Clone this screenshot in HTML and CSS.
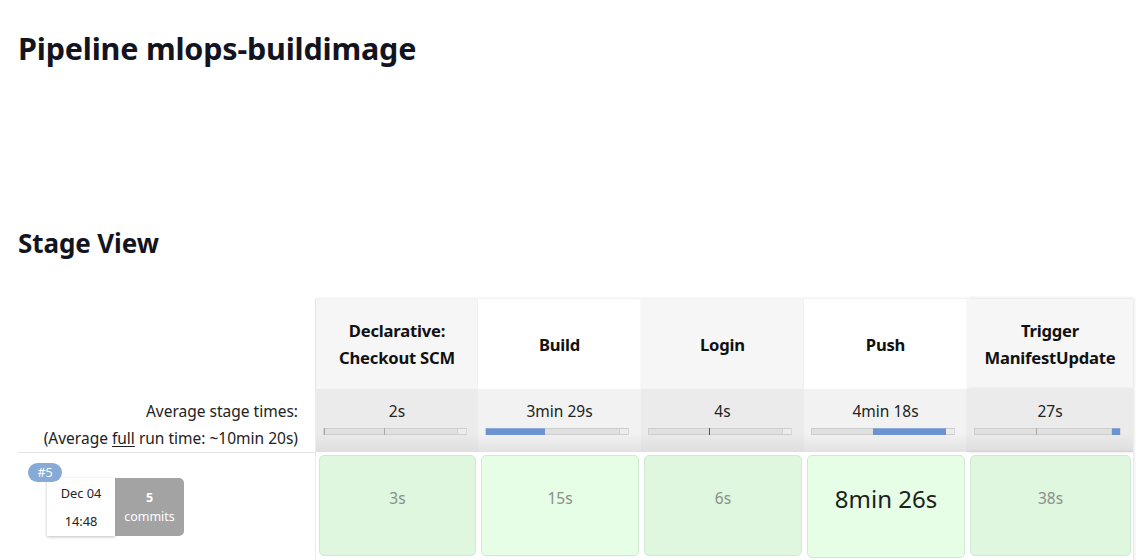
FILE: index.html
```html
<!DOCTYPE html>
<html>
<head>
<meta charset="utf-8">
<link rel="stylesheet" href="styles.css">
</head>
<body>
<h1 class="title">Pipeline mlops-buildimage</h1>
<h2 class="subtitle">Stage View</h2>
<div class="stage-table">
  <div class="corner"></div>
  <div class="head odd">Declarative:<br>Checkout SCM</div>
  <div class="head even">Build</div>
  <div class="head odd">Login</div>
  <div class="head even">Push</div>
  <div class="head odd last">Trigger<br>ManifestUpdate</div>

  <div class="avg-label">
    <div>Average stage times:</div>
    <div>(Average <u>full</u> run time: ~10min 20s)</div>
  </div>
  <div class="avg odd"><div class="avg-time">2s</div><div class="bar"><span class="tick" style="left:0"></span><span class="tick" style="left:60px"></span></div></div>
  <div class="avg even"><div class="avg-time">3min 29s</div><div class="bar"><span class="fill" style="left:0;width:59px"></span></div></div>
  <div class="avg odd"><div class="avg-time">4s</div><div class="bar"><span class="tick dark" style="left:60px"></span></div></div>
  <div class="avg even"><div class="avg-time">4min 18s</div><div class="bar"><span class="fill" style="left:61px;width:73px"></span></div></div>
  <div class="avg odd last"><div class="avg-time">27s</div><div class="bar wide"><span class="tick" style="left:61px"></span><span class="fill" style="left:137px;width:8px"></span></div></div>

  <div class="run-label">
    <div class="run-card">
      <span class="badge">#5</span>
      <div class="date"><div>Dec 04</div><div>14:48</div></div>
      <div class="commits"><b>5</b><span>commits</span></div>
    </div>
  </div>
  <div class="cell-wrap"><div class="cell odd">3s</div></div>
  <div class="cell-wrap"><div class="cell even">15s</div></div>
  <div class="cell-wrap"><div class="cell odd">6s</div></div>
  <div class="cell-wrap"><div class="cell even big">8min 26s</div></div>
  <div class="cell-wrap last"><div class="cell odd">38s</div></div>
</div>
</body>
</html>
```
FILE: styles.css
```css
html, body {
  margin: 0;
  padding: 0;
  background: #fff;
}
body {
  font-family: "Noto Sans", "Open Sans", sans-serif;
  color: #14141f;
  padding-left: 18px;
  width: 1124px;
  height: 560px;
  overflow: hidden;
}
.title {
  font-size: 30.5px;
  font-weight: 700;
  margin: 26px 0 0 0;
  line-height: 44px;
  letter-spacing: -0.2px;
}
.subtitle {
  font-size: 26px;
  font-weight: 700;
  margin: 155px 0 0 0;
  line-height: 36px;
  letter-spacing: -0.1px;
}
.stage-table {
  margin-top: 38px;
  display: grid;
  grid-template-columns: 298px 162px 163px 163px 163px 166px;
  grid-template-rows: 90px 63px 109px;
}
.corner {
  border-right: 1px solid #ececec;
}
.head {
  display: flex;
  align-items: center;
  justify-content: center;
  text-align: center;
  font-weight: 700;
  font-size: 16.6px;
  line-height: 27px;
  color: #111;
  letter-spacing: -0.2px;
  box-shadow: 0 -1px 2px rgba(0,0,0,0.08);
}
.head.odd { background: #f6f6f6; }
.head.even { background: #fff; }
.last { box-shadow: 1px 0 3px rgba(0,0,0,0.12); }
.head.last { box-shadow: 1px -1px 3px rgba(0,0,0,0.12); }
.avg-label {
  text-align: right;
  padding-right: 17px;
  font-size: 15.5px;
  line-height: 27px;
  color: #222;
  padding-top: 9px;
  border-right: 1px solid #ececec;
}
.avg-label u { text-underline-offset: 2px; }
.avg {
  display: flex;
  flex-direction: column;
  align-items: flex-start;
  padding-top: 9px;
  padding-left: 7px;
}
.avg.odd { background: linear-gradient(#ebebeb 0, #ebebeb 70%, #dedede 100%); }
.avg.even { background: linear-gradient(#f2f2f2 0, #f2f2f2 70%, #e2e2e2 100%); }
.avg-time {
  align-self: stretch;
  text-align: center;
  font-size: 15.5px;
  line-height: 26px;
  color: #222;
  padding-right: 7px;
}
.bar {
  position: relative;
  width: 142px;
  height: 5px;
  margin-top: 4px;
  background: #e0e0e0;
  border: 1px solid #cdcdcd;
  border-right-color: #d8d8d8;
}
.bar.wide { width: 145px; }
.bar::after {
  content: "";
  position: absolute;
  right: 0;
  top: 0;
  bottom: 0;
  width: 8px;
  background: #ececec;
  border-left: 1px solid #d2d2d2;
}
.bar .tick {
  position: absolute;
  top: -1px;
  width: 1px;
  height: 7px;
  background: #aaa;
}
.bar .tick.dark { background: #555; }
.bar .fill {
  position: absolute;
  top: -1px;
  height: 7px;
  background: #6b93d0;
  z-index: 1;
  border-top: 1px solid #8aa8d8;
  box-sizing: border-box;
}
.run-label {
  border-top: 1px solid #e2e2e2;
  border-bottom: 1px solid #e2e2e2;
  border-right: 1px solid #ececec;
  padding: 25px 0 0 29px;
}
.run-card {
  position: relative;
  display: flex;
  height: 58px;
}
.badge {
  position: absolute;
  left: -19px;
  top: -15px;
  width: 34px;
  height: 19px;
  border-radius: 10px;
  background: #88aad6;
  color: #fff;
  font-size: 12.5px;
  line-height: 19px;
  text-align: center;
  z-index: 2;
}
.date {
  width: 68px;
  background: #fff;
  box-shadow: 0 1px 3px rgba(0,0,0,0.25);
  display: flex;
  flex-direction: column;
  align-items: center;
  justify-content: center;
  gap: 9px;
  font-size: 12.8px;
  color: #222;
  line-height: 19px;
}
.commits {
  width: 69px;
  background: #a3a3a3;
  border-radius: 0 5px 5px 0;
  color: #fff;
  display: flex;
  flex-direction: column;
  align-items: center;
  justify-content: center;
  font-size: 12.5px;
  line-height: 19px;
}
.commits b { font-weight: 700; }
.cell-wrap {
  padding: 3px 2px 2px 3px;
}
.cell {
  height: 101px;
  border-radius: 5px;
  border: 1px solid #d3e8d3;
  display: flex;
  align-items: center;
  justify-content: center;
  padding-bottom: 16px;
  font-size: 15.5px;
  color: #8a8f8a;
  box-sizing: border-box;
}
.cell.odd { background: #dff6df; }
.cell.even { background: #e5fee5; }
.cell.big {
  font-size: 24px;
  color: #1e1e1e;
  height: 103px;
}
```
